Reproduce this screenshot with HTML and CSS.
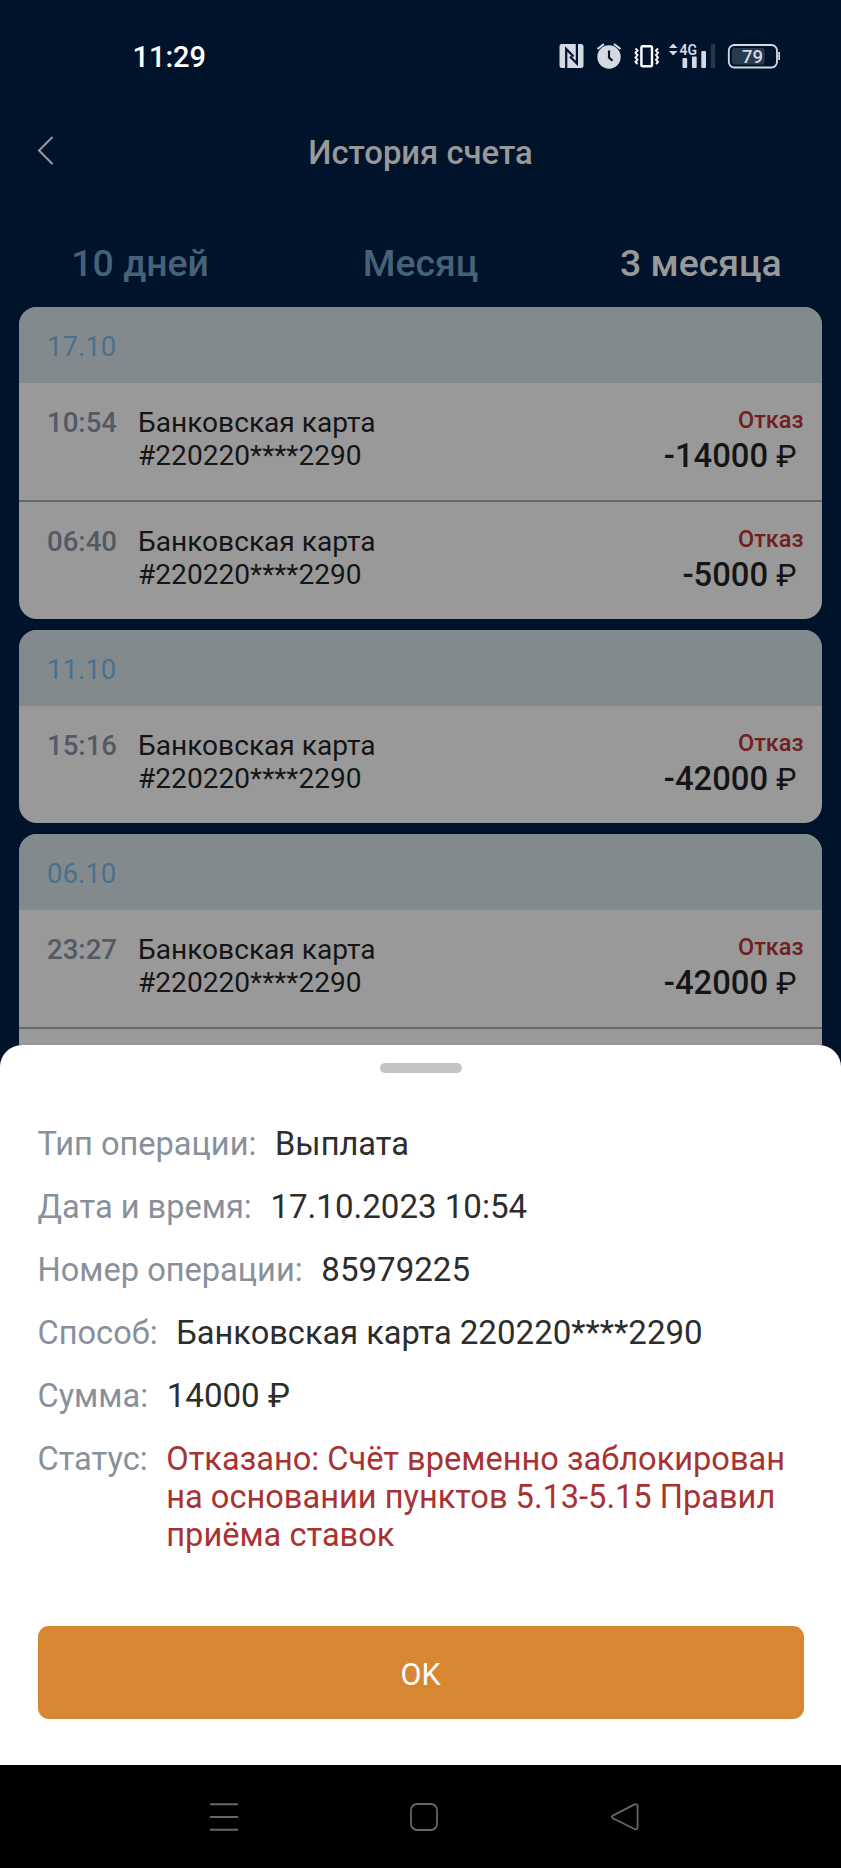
FILE: index.html
```html
<!DOCTYPE html>
<html lang="ru">
<head>
<meta charset="utf-8">
<title>История счета</title>
<link rel="stylesheet" href="styles.css">
</head>
<body>
<div class="screen">
  <header class="statusbar">
    <span class="clock">11:29</span>
    <svg class="status-icons" width="230" height="40" viewBox="0 0 230 40">
      <rect x="4.500" y="4" width="24" height="24" rx="2.500" fill="#d5dae2"/>
      <path d="M11.200 28V9L18.500 16.500M15 16.500L21.900 23.500V4" fill="none" stroke="#00132b" stroke-width="2.200"/>
      <circle cx="54" cy="17" r="11.700" fill="#d5dae2"/>
      <path d="M54 10.500V17.500L57.500 20.800" fill="none" stroke="#00132b" stroke-width="2.200"/>
      <path d="M42.500 9L49 4M65.500 9L59 4" fill="none" stroke="#d5dae2" stroke-width="2.200"/>
      <rect x="86.400" y="6.200" width="10.600" height="20" rx="1.500" fill="none" stroke="#fff" stroke-width="2.400"/>
      <path d="M80.500 8.500l2 2-2 2.300 2 2.300-2 2.300 2 2.300-2 2.300 2 2M103 8.500l-2 2 2 2.300-2 2.300 2 2.300-2 2.300 2 2.300-2 2" fill="none" stroke="#fff" stroke-width="1.900"/>
      <path d="M114 8l4.200-4.500L122.500 8zM114 11l4.200 4.500L122.500 11z" fill="#d5dae2"/>
      <text class="net" x="124.500" y="14.800" textLength="17.500" lengthAdjust="spacingAndGlyphs">4G</text>
      <rect x="127.500" y="18" width="4.700" height="10" rx="1" fill="#d5dae2"/>
      <rect x="137" y="16.500" width="4.700" height="11.500" rx="1" fill="#d5dae2"/>
      <rect x="146.300" y="11" width="4.700" height="17" rx="1" fill="#d5dae2"/>
      <rect x="155.800" y="4" width="4.400" height="24" rx="1" fill="#27364a"/>
      <rect x="173.800" y="5" width="48.200" height="22.500" rx="5.500" fill="none" stroke="#d5dae2" stroke-width="1.800"/>
      <rect x="177" y="8" width="32.500" height="16.500" rx="2.500" fill="#273a50"/>
      <path d="M223.300 12h1.700v8h-1.700z" fill="#d5dae2"/>
      <text class="charge" x="197.500" y="22.900">79</text>
    </svg>
  </header>

  <div class="titlebar">
    <svg class="back" width="20" height="32" viewBox="0 0 20 32"><path d="M17 2.500L4 15.500L17 28.500" fill="none" stroke="#999" stroke-width="2" stroke-linecap="round"/></svg>
    <h1 class="title">История счета</h1>
  </div>

  <nav class="tabs">
    <span class="tab">10 дней</span>
    <span class="tab">Месяц</span>
    <span class="tab tab-active">3 месяца</span>
  </nav>

  <main class="history">
    <section class="card">
      <div class="date">17.10</div>
      <div class="row">
        <span class="time">10:54</span>
        <p class="name">Банковская карта<br>#220220****2290</p>
        <div class="result"><span class="state">Отказ</span><span class="amount">-14000 <span class="rub">₽</span></span></div>
      </div>
      <div class="row">
        <span class="time">06:40</span>
        <p class="name">Банковская карта<br>#220220****2290</p>
        <div class="result"><span class="state">Отказ</span><span class="amount">-5000 <span class="rub">₽</span></span></div>
      </div>
    </section>
    <section class="card">
      <div class="date">11.10</div>
      <div class="row">
        <span class="time">15:16</span>
        <p class="name">Банковская карта<br>#220220****2290</p>
        <div class="result"><span class="state">Отказ</span><span class="amount">-42000 <span class="rub">₽</span></span></div>
      </div>
    </section>
    <section class="card">
      <div class="date">06.10</div>
      <div class="row">
        <span class="time">23:27</span>
        <p class="name">Банковская карта<br>#220220****2290</p>
        <div class="result"><span class="state">Отказ</span><span class="amount">-42000 <span class="rub">₽</span></span></div>
      </div>
      <div class="row"></div>
    </section>
  </main>

  <section class="sheet">
    <div class="handle"></div>
    <dl class="details">
      <div class="detail"><dt>Тип операции:</dt><dd>Выплата</dd></div>
      <div class="detail"><dt>Дата и время:</dt><dd class="digits">17.10.2023 10:54</dd></div>
      <div class="detail"><dt>Номер операции:</dt><dd class="digits">85979225</dd></div>
      <div class="detail"><dt>Способ:</dt><dd>Банковская карта <span class="digits">220220****2290</span></dd></div>
      <div class="detail"><dt>Сумма:</dt><dd class="digits">14000 ₽</dd></div>
      <div class="detail"><dt>Статус:</dt><dd class="refused">Отказано: Счёт временно заблокирован<br>на основании пунктов 5.13-5.15 Правил<br>приёма ставок</dd></div>
    </dl>
    <button class="ok">OK</button>
  </section>

  <footer class="navbar">
    <svg width="30" height="30" viewBox="0 0 30 30"><path d="M1 2.200h28M1 15h28M1 27.800h28" stroke="#666" stroke-width="2"/></svg>
    <svg width="30" height="30" viewBox="0 0 30 30"><rect x="2" y="2" width="26" height="26" rx="6" fill="none" stroke="#666" stroke-width="1.800"/></svg>
    <svg width="30" height="30" viewBox="0 0 30 30"><path d="M2.800 13.600L24.500 2.400Q27.600 1.300 27.600 4.500V25Q27.600 28.500 24.500 27L2.800 16.200Q1 14.900 2.800 13.600Z" fill="none" stroke="#666" stroke-width="1.800"/></svg>
  </footer>
</div>
</body>
</html>
```
FILE: styles.css
```css
* { box-sizing: border-box; }
body {
  margin: 0;
  background: #00132b;
  font-family: Roboto, "Noto Sans", sans-serif;
}
.screen {
  display: flex;
  flex-direction: column;
  width: 841px;
  height: 1868px;
  overflow: hidden;
  background: #00132b;
}
.statusbar {
  display: flex;
  justify-content: space-between;
  align-items: flex-start;
  flex: none;
  height: 120px;
  padding: 40px 56px 0 132.500px;
}
.clock {
  font: 500 29px/34px Roboto, sans-serif;
  color: #fff;
}
.status-icons { flex: none; }
.net { font: 600 15.500px Roboto, sans-serif; fill: #d5dae2; }
.charge { font: 500 18.500px Roboto, sans-serif; fill: #d5dae2; text-anchor: middle; }
.titlebar {
  display: flex;
  flex: none;
  height: 107px;
  padding: 13px 35px 0;
}
.back { margin-top: 2px; }
.title {
  flex: 1;
  margin: 1px 20px 0 0;
  text-align: center;
  font-weight: 500;
  font-size: 32.800px;
  line-height: 38px;
  color: #999;
}
.tabs {
  display: flex;
  flex: none;
  height: 80px;
  padding-top: 14px;
}
.tab {
  flex: 1;
  text-align: center;
  font-weight: 500;
  font-size: 37.450px;
  line-height: 44px;
  color: #466279;
}
.tab-active { color: #999; }
.history {
  display: flex;
  flex-direction: column;
  flex: none;
  gap: 11.400px;
  height: 737.500px;
  padding: 0 19px;
  overflow: hidden;
}
.card {
  flex: none;
  overflow: hidden;
  border-radius: 18px;
  background: #999;
}
.date {
  height: 75.600px;
  padding: 23px 28px 0;
  font-size: 27.600px;
  line-height: 33px;
  color: #49718d;
  background: #838a8e;
}
.row {
  display: flex;
  height: 117px;
  padding: 23px 18.500px 0 28px;
}
.row + .row {
  height: 119px;
  border-top: 2px solid #616976;
}
.time {
  flex: none;
  width: 91px;
  font-weight: 500;
  font-size: 27.600px;
  line-height: 33px;
  color: #535965;
}
.name {
  flex: 1;
  margin: 0;
  font-size: 28.100px;
  line-height: 33px;
  color: #151515;
}
.result {
  display: flex;
  flex-direction: column;
  align-items: flex-end;
}
.state {
  font-weight: 500;
  font-size: 23.500px;
  line-height: 28px;
  color: #702020;
}
.amount {
  margin-top: 3px;
  padding-right: 7px;
  font-weight: 500;
  font-size: 32.800px;
  line-height: 38px;
  color: #151515;
}
.rub { font-weight: 400; font-size: 30.500px; }
.sheet {
  display: flex;
  flex-direction: column;
  flex: none;
  height: 720.500px;
  padding: 18px 37.500px 46.500px;
  border-radius: 22px 22px 0 0;
  background: #fff;
}
.handle {
  flex: none;
  align-self: center;
  width: 82px;
  height: 10px;
  border-radius: 5px;
  background: #c4c4c4;
}
.details {
  display: flex;
  flex-direction: column;
  gap: 25px;
  flex: 1;
  margin: 52px 0 0;
  font-size: 32.600px;
  line-height: 38.300px;
}
.detail { display: flex; gap: 18.700px; height: 38px; }
dt { color: #88909c; white-space: nowrap; }
dd { margin: 0; color: #2d2d2d; white-space: nowrap; }
.digits { font-size: 33.100px; }
.refused { color: #a83232; }
.ok {
  flex: none;
  height: 93px;
  padding: 5px 0 0;
  border: 0;
  border-radius: 11px;
  background: #d78631;
  color: #fff;
  font: 400 30.500px/35px Roboto, sans-serif;
}
.navbar {
  display: flex;
  justify-content: space-between;
  flex: 1;
  padding: 36.500px 201px 0 208.500px;
  background: #000;
}
```
